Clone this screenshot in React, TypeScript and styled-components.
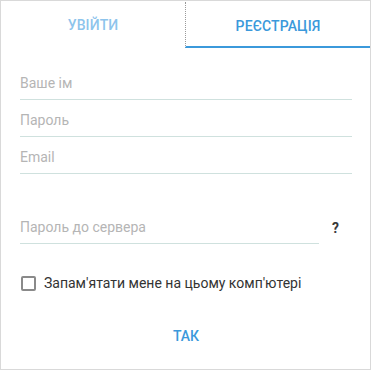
import styled, { createGlobalStyle } from "styled-components";

const Global = createGlobalStyle`
  html, body {
    margin: 0;
    padding: 0;
    background: #ffffff;
  }
  body {
    font-family: Roboto, "Liberation Sans", sans-serif;
  }
`;

function App() {
  return (
    <>
      <Global />
      <Panel>
        <Tabs>
          <Tab>Увійти</Tab>
          <Tab $active>Реєстрація</Tab>
        </Tabs>
        <Form>
          <Field>
            <Input placeholder="Ваше ім" />
          </Field>
          <Field>
            <Input placeholder="Пароль" type="password" />
          </Field>
          <Field>
            <Input placeholder="Email" />
          </Field>
          <ServerRow>
            <Field>
              <Input placeholder="Пароль до сервера" type="password" />
            </Field>
            <Help>?</Help>
          </ServerRow>
          <CheckRow>
            <Box />
            <CheckLabel>Запам'ятати мене на цьому комп'ютері</CheckLabel>
          </CheckRow>
          <Submit>Так</Submit>
        </Form>
      </Panel>
    </>
  );
}
export default App;

export const Panel = styled.div`
  box-sizing: border-box;
  width: 371px;
  height: 370px;
  border: 1px solid #d9d9d9;
  background: #fff;
  display: flex;
  flex-direction: column;
`;

export const Tabs = styled.div`
  display: grid;
  grid-template-columns: 184px 1fr;
  height: 47px;
`;

export const Tab = styled.div<{ $active?: boolean }>`
  display: flex;
  align-items: center;
  justify-content: center;
  padding-top: 3px;
  text-transform: uppercase;
  font-size: 14px;
  font-weight: 500;
  letter-spacing: 0.1px;
  color: ${(p) => (p.$active ? "#3b99db" : "#8dc4ec")};
  border-left: ${(p) => (p.$active ? "1px dotted #9a9a9a" : "none")};
  border-bottom: ${(p) => (p.$active ? "2px solid #3b99db" : "2px solid transparent")};
  margin-top: ${(p) => (p.$active ? "1px" : "0")};
`;

export const Form = styled.div`
  display: flex;
  flex-direction: column;
  padding: 15px 18px 0 19px;
`;

export const Field = styled.div`
  flex: 1 0 auto;
  height: 36px;
  border-bottom: 1px solid #cfe1de;
  display: flex;
  align-items: flex-end;
`;

export const Input = styled.input`
  width: 100%;
  border: none;
  outline: none;
  padding: 0 0 8px 0;
  font-family: Roboto, "Liberation Sans", sans-serif;
  font-size: 14px;
  color: #333;
  background: transparent;
  &::placeholder {
    color: #b5b5b5;
  }
`;

export const ServerRow = styled.div`
  display: flex;
  align-items: flex-end;
  margin-top: 33px;
`;

export const Help = styled.div`
  width: 33px;
  padding-bottom: 8px;
  text-align: center;
  font-size: 14px;
  font-weight: 700;
  color: #3a3a3a;
`;

export const CheckRow = styled.div`
  display: flex;
  align-items: center;
  gap: 8px;
  margin-top: 31px;
`;

export const Box = styled.span`
  box-sizing: border-box;
  width: 15px;
  height: 15px;
  border: 2px solid #8a8a8a;
  border-radius: 2px;
  margin-left: 1px;
`;

export const CheckLabel = styled.span`
  font-size: 14px;
  color: #333;
`;

export const Submit = styled.button`
  align-self: center;
  margin-top: 33px;
  border: none;
  background: none;
  text-transform: uppercase;
  font-family: Roboto, "Liberation Sans", sans-serif;
  font-size: 14px;
  font-weight: 500;
  color: #3b99db;
  padding: 4px 8px;
  cursor: pointer;
`;
